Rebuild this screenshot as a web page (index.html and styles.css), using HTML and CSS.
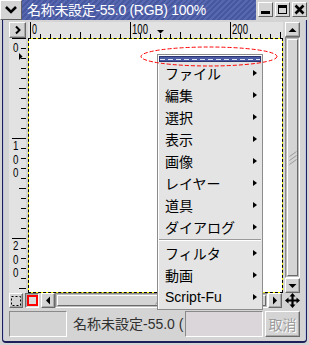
FILE: index.html
```html
<!DOCTYPE html>
<html lang="ja">
<head>
    <meta charset="UTF-8">
    <title>名称未設定-55.0 (RGB) 100%</title>
    <link rel="stylesheet" href="styles.css">
</head>
<body>

<div class="window">
    <!-- window manager title bar -->
    <div class="titlebar">
        <div class="wm-menu">
            <svg width="14" height="10" viewBox="0 0 14 10"><path d="M2 2L7 7L12 2" fill="none" stroke="#000" stroke-width="2.6"/></svg>
        </div>
        <div class="title">名称未設定-55.0 (RGB) 100%</div>
        <div class="wm-buttons">
            <span class="wm-btn"><svg width="13" height="13"><rect x="2" y="8" width="9" height="3" fill="#000"/></svg></span>
            <span class="wm-btn"><svg width="13" height="13"><rect x="2.5" y="2.5" width="8" height="8" fill="none" stroke="#000"/><rect x="2" y="2" width="9" height="3" fill="#000"/></svg></span>
            <span class="wm-btn"><svg width="13" height="13"><path d="M2.5 2.5L10.5 10.5M10.5 2.5L2.5 10.5" stroke="#000" stroke-width="2.6"/></svg></span>
        </div>
    </div>

    <div class="frame">
        <div class="view">
            <div class="btn corner">
                <svg width="8" height="10"><path d="M2 1.5L5.5 5L2 8.5" fill="none" stroke="#000" stroke-width="2"/></svg>
            </div>

            <div class="hruler">
                <svg width="255" height="16">
                    <defs>
                        <pattern id="hticks" x="2" width="10" height="16" patternUnits="userSpaceOnUse">
                            <path d="M0.5 12V16" stroke="#000"/>
                        </pattern>
                    </defs>
                    <rect width="255" height="16" fill="url(#hticks)"/>
                    <path d="M2.5 0V16M102.5 0V16M202.5 0V16M52.5 10V16M152.5 10V16M252.5 10V16" stroke="#000"/>
                    <text class="rnum" x="4" y="12" textLength="5" lengthAdjust="spacingAndGlyphs">0</text>
                    <text class="rnum" x="104" y="12" textLength="16" lengthAdjust="spacingAndGlyphs">100</text>
                    <text class="rnum" x="204" y="12" textLength="16" lengthAdjust="spacingAndGlyphs">200</text>
                    <path d="M129 8H136L132.5 11.5Z" fill="#000"/>
                </svg>
            </div>

            <div class="vscroll">
                <div class="btn arrow">
                    <svg width="9" height="6"><path d="M0.5 5H8.5L4.5 1Z" fill="#000"/></svg>
                </div>
                <div class="trough">
                    <div class="thumb">
                        <svg width="8" height="14"><path d="M0.5 5.5L7.5 0.5M0.5 9.5L7.5 4.5M0.5 13.5L7.5 8.5" stroke="#999"/></svg>
                    </div>
                </div>
                <div class="btn arrow">
                    <svg width="9" height="6"><path d="M0.5 1H8.5L4.5 5Z" fill="#000"/></svg>
                </div>
            </div>

            <div class="vruler">
                <svg width="17" height="255">
                    <defs>
                        <pattern id="vticks" width="17" height="10" patternUnits="userSpaceOnUse">
                            <path d="M12 0.5H17" stroke="#000"/>
                        </pattern>
                    </defs>
                    <rect width="17" height="255" fill="url(#vticks)"/>
                    <path d="M3 0.5H17M3 100.5H17M3 200.5H17M10 50.5H17M10 150.5H17M10 250.5H17" stroke="#000"/>
                    <g transform="scale(0.75 1)">
                        <text class="rnum vnum" x="9" y="3">0</text>
                        <text class="rnum vnum" x="9" y="101">100</text>
                        <text class="rnum vnum" x="9" y="201">200</text>
                    </g>
                    <path d="M10 15V22L13.5 18.5Z" fill="#000"/>
                </svg>
            </div>

            <div class="canvas"><div class="layer"></div></div>

            <div class="bottombar">
                <div class="btn qmask">
                    <svg width="10" height="10"><rect x="0.5" y="0.5" width="9" height="9" fill="none" stroke="#000" stroke-dasharray="2 2"/></svg>
                </div>
                <div class="btn qmask pressed">
                    <svg width="11" height="11"><rect x="1" y="1" width="9" height="9" fill="none" stroke="#f00" stroke-width="2"/></svg>
                </div>
                <div class="btn harrow">
                    <svg width="6" height="9"><path d="M5 0.5V8.5L1 4.5Z" fill="#000"/></svg>
                </div>
                <div class="htrough">
                    <div class="hthumb">
                        <svg width="14" height="8"><path d="M0.5 7.5L5.5 0.5M4.5 7.5L9.5 0.5M8.5 7.5L13.5 0.5" stroke="#999"/></svg>
                    </div>
                </div>
                <div class="btn harrow">
                    <svg width="6" height="9"><path d="M1 0.5V8.5L5 4.5Z" fill="#000"/></svg>
                </div>
                <div class="nav">
                    <svg width="15" height="15" viewBox="0 0 15 15">
                        <path d="M7.5 3V12M3 7.5H12" stroke="#000" stroke-width="2.2"/>
                        <path d="M7.5 0L10.5 3.5H4.5ZM7.5 15L10.5 11.5H4.5ZM0 7.5L3.5 4.5V10.5ZM15 7.5L11.5 4.5V10.5Z" fill="#000"/>
                    </svg>
                </div>
            </div>
        </div>

        <!-- status bar -->
        <div class="status">
            <div class="sunken cursor-box"></div>
            <div class="status-label">名称未設定-55.0 (</div>
            <div class="sunken progress"></div>
            <div class="btn cancel">取消</div>
        </div>
    </div>

    <!-- image popup menu -->
    <div class="popup">
        <div class="tearoff"></div>
        <div class="item">ファイル<span class="sub"></span></div>
        <div class="item">編集<span class="sub"></span></div>
        <div class="item">選択<span class="sub"></span></div>
        <div class="item">表示<span class="sub"></span></div>
        <div class="item">画像<span class="sub"></span></div>
        <div class="item">レイヤー<span class="sub"></span></div>
        <div class="item">道具<span class="sub"></span></div>
        <div class="item">ダイアログ<span class="sub"></span></div>
        <div class="sep"></div>
        <div class="item">フィルタ<span class="sub"></span></div>
        <div class="item">動画<span class="sub"></span></div>
        <div class="item">Script-Fu<span class="sub"></span></div>
    </div>

    <svg class="mark" width="139" height="21">
        <ellipse cx="69" cy="10.5" rx="68" ry="9.5" fill="none" stroke="#f00" stroke-dasharray="4 2"/>
    </svg>
</div>

</body>
</html>
```

FILE: styles.css
```css
* { box-sizing: border-box; }
body { margin: 0; font-family: "Liberation Sans", "Noto Sans CJK JP", sans-serif; font-size: 14px; background: #d4d4d4; }

.window { position: relative; width: 309px; height: 345px; background: #d4d4d4; display: flex; flex-direction: column; overflow: hidden; }

/* title bar */
.titlebar { height: 20px; display: flex; flex-shrink: 0; }
.wm-menu { width: 22px; height: 20px; display: flex; align-items: center; justify-content: center; border: 1px solid; border-color: #fff #606060 #606060 #fff; background: #d4d4d4; }
.title { flex: 1; color: #fff; padding-left: 5px; line-height: 20px; white-space: nowrap; overflow: hidden; letter-spacing: -0.3px; background: repeating-linear-gradient(135deg, #4757a0 0 2px, #5868b0 2px 4px); }
.wm-buttons { display: flex; gap: 2px; padding: 2px 2px 0 2px; }
.wm-btn { width: 15px; height: 15px; display: flex; align-items: center; justify-content: center; border: 1px solid; border-color: #fff #606060 #606060 #fff; background: #d4d4d4; }

/* window frame */
.frame { flex: 1; margin: 0 2px 2px 2px; padding: 2px 6px 0 6px; border: 1px solid #1c1f5a; border-top: none; border-bottom-width: 2px; border-radius: 0 0 4px 4px; box-shadow: inset 1px 0 #bfc4e0, inset -1px 0 #bfc4e0; }

.view { display: grid; grid-template-columns: 17px 255px 15px; grid-template-rows: 16px 255px 15px; column-gap: 2px; }

.btn { background: #d4d4d4; border: 1px solid; border-color: #fff #6a6a6a #6a6a6a #fff; box-shadow: inset -1px -1px #a8a8a8; display: flex; align-items: center; justify-content: center; }
.btn.pressed { border-color: #6a6a6a #fff #fff #6a6a6a; box-shadow: inset 1px 1px #a8a8a8; background: #dcdcdc; }

.corner { grid-column: 1; grid-row: 1; }

/* rulers */
.hruler, .vruler { background: #e2e2e2; }
.hruler svg, .vruler svg { display: block; }
.hruler { grid-column: 2; grid-row: 1; }
.vruler { grid-column: 1; grid-row: 2; }
.rnum { font-family: "Liberation Sans", sans-serif; font-size: 14px; fill: #000; }
.vnum { font-size: 13px; writing-mode: vertical-rl; text-orientation: upright; }

/* vertical scrollbar */
.vscroll { grid-column: 3; grid-row: 1 / 3; display: flex; flex-direction: column; }
.vscroll .arrow { height: 15px; }
.trough { flex: 1; display: flex; background: #bcbcbc; padding: 1px; border: 1px solid; border-color: #8a8a8a #fff #fff #8a8a8a; }
.thumb { flex: 1; display: flex; align-items: center; justify-content: center; background: #d4d4d4; border: 1px solid; border-color: #fff #6a6a6a #6a6a6a #fff; }

/* canvas */
.canvas { grid-column: 2; grid-row: 2; background: #ffff00; border: 1px dashed #000; }
.layer { width: 100%; height: 100%; background: #fff; }

/* bottom row */
.bottombar { grid-column: 1 / 4; grid-row: 3; display: flex; }
.qmask { width: 14px; margin-right: 2px; }
.harrow { width: 14px; }
.harrow:last-of-type { width: 15px; }
.htrough { flex: 1; display: flex; background: #bcbcbc; padding: 1px; border: 1px solid; border-color: #8a8a8a #fff #fff #8a8a8a; }
.hthumb { flex: 1; display: flex; align-items: center; justify-content: center; background: #d4d4d4; border: 1px solid; border-color: #fff #6a6a6a #6a6a6a #fff; }
.nav { width: 15px; margin-left: 3px; display: flex; align-items: center; justify-content: center; }

/* status bar */
.status { display: flex; height: 26px; margin-top: 3px; }
.sunken { border: 1px solid; border-color: #8a8a8a #fff #fff #8a8a8a; background: #d4d4d4; }
.cursor-box { width: 58px; }
.status-label { flex: 1; padding-left: 6px; line-height: 26px; color: #303030; white-space: nowrap; overflow: hidden; }
.progress { width: 78px; background: #dad6da; }
.cancel { width: 35px; margin-left: 2px; color: #9c9c9c; text-shadow: 1px 1px #fff; }

/* popup menu */
.popup { position: absolute; left: 157px; top: 54px; width: 106px; background: #e4e4e4; border: 1px solid #8c8c8c; box-shadow: inset 1px 1px #fff; padding: 1px; }
.tearoff { height: 6px; border: 1px solid #2c3470; background: repeating-linear-gradient(90deg, #dfe3f5 0 5px, transparent 5px 8px) center / 100% 1px no-repeat, #4c5ca4; }
.item { height: 22px; display: flex; align-items: center; justify-content: space-between; padding: 0 4px 0 6px; color: #000; white-space: nowrap; }
.sub { width: 0; height: 0; border-left: 4px solid #000; border-top: 3px solid transparent; border-bottom: 3px solid transparent; }
.sep { height: 2px; margin: 1px 0; border-top: 1px solid #9a9a9a; border-bottom: 1px solid #fff; }

/* red annotation round the tear-off line */
.mark { position: absolute; left: 140px; top: 46px; }
```
